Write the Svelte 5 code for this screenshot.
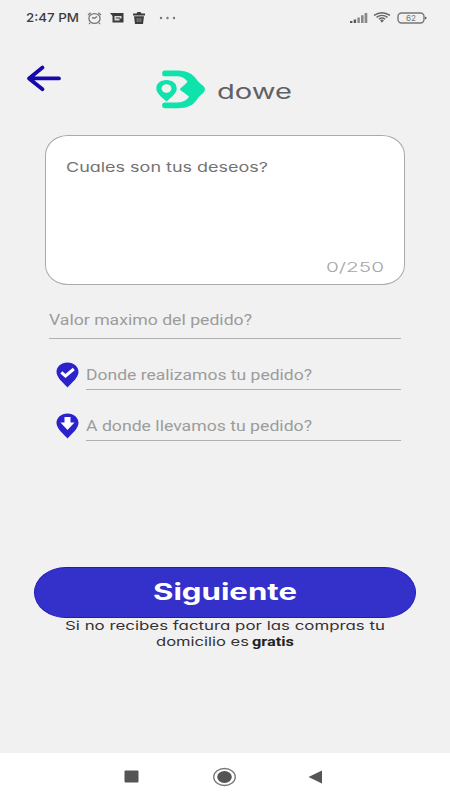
<script lang="ts">
	const fields = [
		{ id: 'value', label: 'Valor maximo del pedido?', width: 203, icon: '' },
		{ id: 'from', label: 'Donde realizamos tu pedido?', width: 226, icon: 'check' },
		{ id: 'to', label: 'A donde llevamos tu pedido?', width: 226, icon: 'down' }
	];
</script>

<!-- text fitted to a fixed width, with the glyphs stretched -->
{#snippet wide(text: string, width: number, height: number, baseline: number, kind: string)}
	<svg class={`wide ${kind}`} {width} {height}>
		<text x="0" y={baseline} textLength={width} lengthAdjust="spacingAndGlyphs">{text}</text>
	</svg>
{/snippet}

<div class="screen">
	<header class="status">
		{@render wide('2:47 PM', 53, 14, 10.5, 'clock')}
		<svg class="alarm" width="15" height="14" viewBox="0 0 15 14">
			<ellipse cx="7.5" cy="7.5" rx="5.6" ry="4.9" />
			<path d="M1 4 3.6 1.7M14 4 11.4 1.7M5 7h3l2-1.6M3 12l-1 1M12 12l1 1" />
		</svg>
		<svg class="card-icon" width="14" height="12" viewBox="0 0 14 12">
			<path d="M0 1h13.5v9.5H2.5V4z" />
			<path class="cut" d="M4.5 4h7v2.5H9.5v2h-5z" />
			<path d="M6 5.5h4v1H6z" />
		</svg>
		<svg class="trash" width="14" height="12" viewBox="0 0 14 12">
			<path d="M1 1.5h3.5L5.5 0h3l1 1.5H13v2H1zM2 4.3h10L11 12H3z" />
			<path class="slot" d="M5.2 6v4M7 6v4M8.8 6v4" />
		</svg>
		<svg class="dots" width="17" height="4" viewBox="0 0 17 4">
			<circle cx="2" cy="2" r="1.2" />
			<circle cx="8.5" cy="2" r="1.2" />
			<circle cx="15" cy="2" r="1.2" />
		</svg>
		<svg class="signal" width="18" height="11" viewBox="0 0 18 11">
			<path d="M0 9h2.4v2H0zM3.7 7.4h2.4V11H3.7z" />
			<path class="soft" d="M7.4 5.5h2.4V11H7.4zM11 3.3h2.6V11H11zM14.6 1h2.7v10h-2.7z" />
		</svg>
		<svg class="wifi" width="18" height="11" viewBox="0 0 18 11">
			<path d="M1 3.4Q9-2 17 3.4M3.5 5.4Q9 1.4 14.5 5.4M5.8 7.3Q9 4.8 12.2 7.3" />
			<path class="dot" d="M7 8.2Q9 7 11 8.2L9 10.8z" />
		</svg>
		<svg class="battery" width="31" height="12" viewBox="0 0 31 12">
			<rect x="1" y="1" width="26" height="10" rx="3.5" />
			<path d="M28 4.4 30 6l-2 1.6z" />
			<text x="9" y="9" textLength="10" lengthAdjust="spacingAndGlyphs">62</text>
		</svg>
	</header>

	<div class="brand">
		<svg class="back" width="35" height="27" viewBox="0 0 35 27">
			<path d="M32 13.4H3M15.5 2.6 2 13.4 15.5 24.2" />
		</svg>
		<svg class="mark" width="50" height="40" viewBox="0 0 50 40">
			<path
				d="M9 .5h13C31 .5 37 4 41 10c2.500 4 8 5.500 8 9.300S43.500 25 41 29.500C37 35.500 31 38.200 22 38.200H9a2.900 2.900 0 0 1 0-5.800h12c6 0 10-2.400 12-5.900L24.300 20q-.9-.8 0-1.600L30 13.500l1.500-2C29 8 25 6.300 21 6.300H9A2.900 2.900 0 0 1 9 .5z"
			/>
			<path d="M10.500 10C4.500 10 .3 13.500.3 18.500c0 4.500 4.500 8 10.200 13 5.700-5 10.200-8.500 10.200-13 0-5-4.200-8.500-10.200-8.500z" />
			<ellipse class="hole" cx="10.500" cy="18.500" rx="4.900" ry="4.200" />
		</svg>
		{@render wide('dowe', 75, 24, 18.500, 'name')}
	</div>

	<main>
		<div class="wishes">
			{@render wide('Cuales son tus deseos?', 202, 20, 15, 'prompt')}
			{@render wide('0/250', 58, 16, 13, 'count')}
		</div>

		{#each fields as field (field.id)}
			<div class={`row ${field.id}`}>
				{#if field.icon}
					<svg class="pin" width="23" height="26" viewBox="0 0 23 26">
						<path d="M11.500.5C5 .5.5 4.800.5 10c0 5.500 7 11 11 15.500 4-4.500 11-10 11-15.500C22.500 4.800 18 .5 11.500.5z" />
						{#if field.icon === 'check'}
							<path class="tick" d="M5.300 10.300 9.500 14l8.300-7" />
						{:else}
							<path class="arrow" d="M8.500 4h6v5.500h4L11.500 17l-7-7.500h4z" />
						{/if}
					</svg>
				{/if}
				<div class="line">
					{@render wide(field.label, field.width, 20, 15, 'placeholder')}
				</div>
			</div>
		{/each}
	</main>

	<footer>
		<button>{@render wide('Siguiente', 144, 30, 21.5, 'action')}</button>
		<div class="note">
			{@render wide('Si no recibes factura por las compras tu', 320, 16, 11.7, 'small')}
			<div class="ending">
				{@render wide('domicilio es', 93, 16, 11.5, 'small')}
				{@render wide('gratis', 42, 16, 11.5, 'small strong')}
			</div>
		</div>
	</footer>

	<nav>
		<svg width="15" height="13" viewBox="0 0 15 13">
			<rect x=".5" y=".5" width="14" height="12" rx="1" />
		</svg>
		<svg width="24" height="20" viewBox="0 0 24 20">
			<ellipse class="ring" cx="11.500" cy="10" rx="10.800" ry="8.500" />
			<ellipse cx="11.500" cy="10" rx="7.300" ry="6" />
		</svg>
		<svg width="15" height="14" viewBox="0 0 15 14">
			<path d="M.5 7 14 .6v12.800z" />
		</svg>
	</nav>
</div>

<style>
	:global(body) {
		margin: 0;
		background: #f1f1f1;
	}

	.screen {
		display: flex;
		flex-direction: column;
		width: 450px;
		height: 800px;
		overflow: hidden;
		background: #f1f1f1;
		font-family: Inter, 'Liberation Sans', sans-serif;
		/* single-storey a */
		font-feature-settings: 'cv11';
	}

	svg {
		display: block;
		flex: none;
		overflow: visible;
	}

	.status {
		display: flex;
		align-items: center;
		box-sizing: border-box;
		height: 35px;
		padding: 0 22px 0 26px;
		fill: #555;
	}

	.clock {
		margin-right: 8px;
		font-size: 12px;
		font-weight: 500;
		fill: #3c3c3c;
	}

	.alarm {
		margin-right: 8px;
		fill: none;
		stroke: #777;
		stroke-width: 1.3;
	}

	.card-icon,
	.trash {
		margin-right: 8px;
		fill: #3c3c3c;
	}

	.card-icon .cut {
		fill: #d8d8d8;
	}

	.slot {
		stroke: #999;
		stroke-width: 0.8;
	}

	.dots {
		margin-left: 5px;
		fill: #777;
	}

	.signal {
		margin-left: auto;
		margin-right: 5px;
	}

	.soft {
		fill: #888;
	}

	.wifi {
		margin-right: 6px;
		fill: none;
		stroke: #666;
		stroke-width: 1.4;
	}

	.dot {
		fill: #666;
		stroke: none;
	}

	.battery rect {
		fill: none;
		stroke: #777;
		stroke-width: 1.4;
	}

	.battery text {
		font-size: 8px;
		fill: #777;
	}

	.brand {
		display: flex;
		align-items: flex-start;
		height: 100px;
		padding-left: 27px;
	}

	.back {
		margin-top: 30px;
		fill: none;
		stroke: #1509aa;
		stroke-width: 3.8;
		stroke-linecap: round;
		stroke-linejoin: round;
	}

	.mark {
		margin: 35px 11px 0 94px;
		fill: #0fe3ac;
	}

	.hole {
		fill: #f1f1f1;
	}

	.name {
		margin-top: 45px;
		font-size: 20.5px;
		fill: #606163;
	}

	main {
		flex: 1;
		padding: 0 45px;
	}

	.wishes {
		display: flex;
		flex-direction: column;
		justify-content: space-between;
		box-sizing: border-box;
		height: 150px;
		padding: 21px 20px 9px;
		border: 1.5px solid #aaa;
		border-radius: 23px / 20px;
		background: #fff;
	}

	.prompt {
		font-size: 13.5px;
		fill: #737373;
	}

	.count {
		align-self: flex-end;
		font-size: 13.5px;
		font-weight: 300;
		fill: #a5a5a5;
	}

	.row {
		display: flex;
		align-items: flex-start;
		height: 51px;
		padding: 0 4px;
	}

	.row.value {
		height: 54px;
		margin-top: 25px;
	}

	.row.from,
	.row.to {
		padding-left: 11px;
	}

	.pin {
		margin: -2px 7px 0 0;
		fill: #2b22cc;
	}

	.tick {
		fill: none;
		stroke: #fff;
		stroke-width: 3;
	}

	.arrow {
		fill: #fff;
	}

	.line {
		flex: 1;
		height: 24px;
		padding-top: 1px;
		border-bottom: 1.5px solid #b0b0b0;
	}

	.value .line {
		height: 28px;
		padding-top: 0;
	}

	.placeholder {
		font-family: Roboto, sans-serif;
		font-size: 14.5px;
		fill: #9c9c9c;
	}

	footer {
		height: 186px;
		padding: 0 34px;
	}

	button {
		display: flex;
		align-items: center;
		justify-content: center;
		width: 100%;
		height: 51px;
		padding: 0;
		border: 1px solid #2119bd;
		border-radius: 32px / 25.5px;
		background: #3431cb;
		font-feature-settings: inherit;
	}

	.action {
		font-family: Inter, sans-serif;
		font-size: 22.5px;
		font-weight: 700;
		fill: #fff;
	}

	.note {
		display: flex;
		flex-direction: column;
		align-items: center;
	}

	.ending {
		display: flex;
		gap: 3px;
	}

	.small {
		font-size: 12px;
		fill: #333;
	}

	.strong {
		font-family: Roboto, sans-serif;
		font-weight: 700;
		fill: #222;
	}

	nav {
		display: flex;
		align-items: center;
		gap: 74px;
		box-sizing: border-box;
		height: 47px;
		padding-left: 124px;
		background: #fff;
		fill: #555;
	}

	nav svg:last-child {
		margin-left: -3px;
	}

	.ring {
		fill: none;
		stroke: #777;
		stroke-width: 1.3;
	}
</style>
